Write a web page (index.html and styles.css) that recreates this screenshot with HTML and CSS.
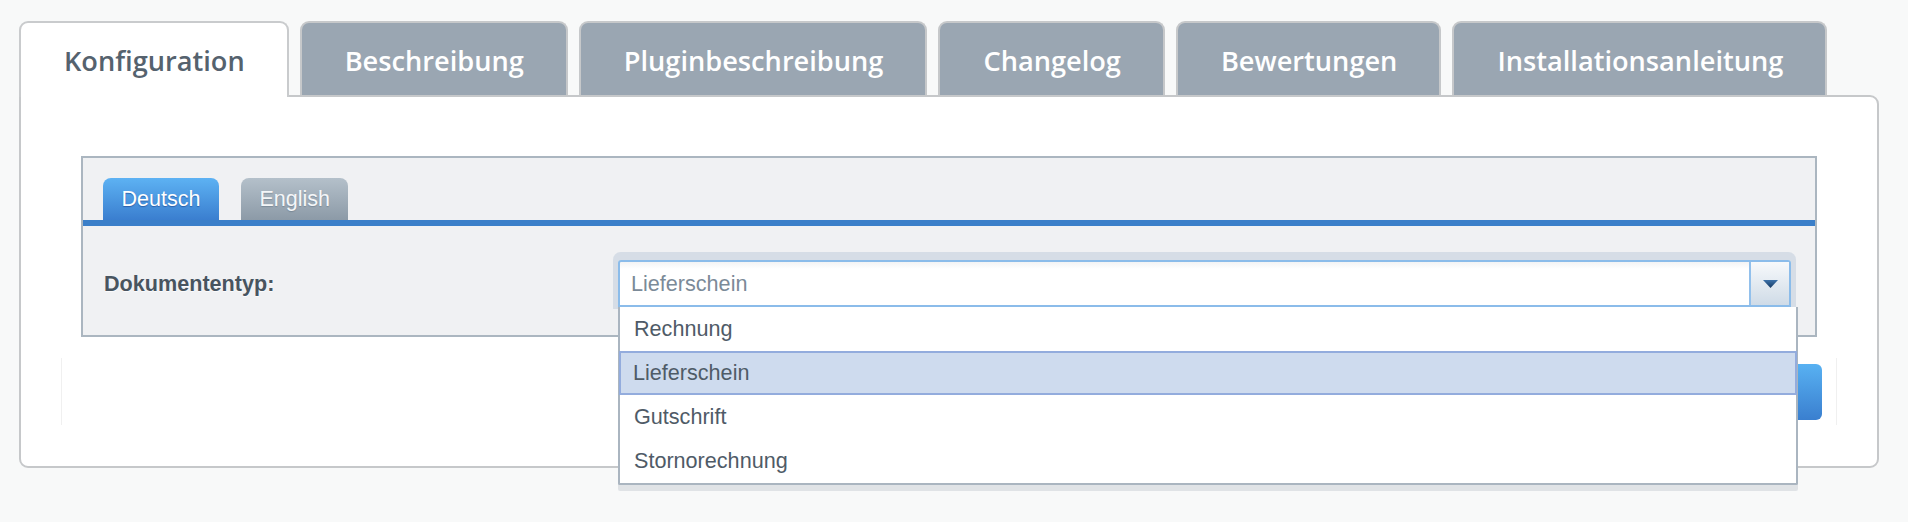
FILE: index.html
```html
<!DOCTYPE html>
<html lang="de">
<head>
<meta charset="utf-8">
<title>Plugin Konfiguration</title>
<link rel="stylesheet" href="styles.css">
</head>
<body>
<div class="page">
  <div class="tabs">
    <div class="tab active">Konfiguration</div>
    <div class="tab">Beschreibung</div>
    <div class="tab">Pluginbeschreibung</div>
    <div class="tab">Changelog</div>
    <div class="tab">Bewertungen</div>
    <div class="tab">Installationsanleitung</div>
  </div>
  <div class="panel">
    <div class="translation">
      <div class="lang-tabs">
        <div class="lang-tab lang-active">Deutsch</div>
        <div class="lang-tab">English</div>
      </div>
      <div class="lang-line"></div>
      <div class="form-row">
        <div class="label">Dokumententyp:</div>
        <div class="combo">
          <div class="select">
            <div class="select-value">Lieferschein</div>
            <div class="select-trigger">
              <svg width="15" height="8" viewBox="0 0 15 8"><defs><linearGradient id="ag" x1="0" y1="0" x2="0" y2="1"><stop offset="0" stop-color="#3d72aa"/><stop offset="1" stop-color="#163a63"/></linearGradient></defs><path d="M0 0 H15 L7.5 8 Z" fill="url(#ag)"/></svg>
            </div>
          </div>
          <ul class="list">
            <li class="item">Rechnung</li>
            <li class="item selected">Lieferschein</li>
            <li class="item">Gutschrift</li>
            <li class="item">Stornorechnung</li>
          </ul>
        </div>
      </div>
    </div>
    <div class="footer">
      <button class="save">Speichern</button>
    </div>
  </div>
</div>
</body>
</html>
```

FILE: styles.css
```css
html, body {
  margin: 0;
  padding: 0;
  background: #f8f9f9;
}
body {
  min-height: 522px;
}
.page {
  padding: 21px 29px 0 19px;
  min-height: 522px;
  box-sizing: border-box;
}
.tabs {
  display: flex;
  gap: 11px;
  align-items: flex-end;
  position: relative;
  z-index: 2;
  margin-bottom: -2px;
}
.tab {
  box-sizing: border-box;
  height: 74px;
  margin-bottom: 2px;
  padding: 3px 42px 0 43px;
  display: flex;
  align-items: center;
  font-family: "Open Sans", "Noto Sans", sans-serif;
  font-weight: 600;
  font-size: 27.2px;
  color: #ffffff;
  background: #9aa6b2;
  border: 2px solid #c6c8ca;
  border-bottom: 0;
  border-radius: 9px 9px 0 0;
  white-space: nowrap;
}
.tab.active {
  height: 76px;
  margin-bottom: 0;
  padding-bottom: 2px;
  background: #ffffff;
  color: #55626e;
  border-color: #c9cbcd;
}
.panel {
  background: #ffffff;
  border: 2px solid #c6c8ca;
  border-radius: 0 9px 9px 9px;
  padding: 59px 40px 41px 40px;
}
.translation {
  margin: 0 20px;
  background: #f0f1f3;
  border: 2px solid #abb6c0;
}
.lang-tabs {
  display: flex;
  gap: 22px;
  padding: 20px 0 0 20px;
}
.lang-tab {
  height: 42px;
  box-sizing: border-box;
  padding: 0 18.5px;
  display: flex;
  align-items: center;
  font-family: "Liberation Sans", Arial, sans-serif;
  font-size: 21.5px;
  color: #f4f6f8;
  text-shadow: 0 1px 1px rgba(40, 60, 80, 0.25);
  border-radius: 8px 8px 0 0;
  background: linear-gradient(#b4c0ca, #8c9aa7);
}
.lang-tab.lang-active {
  color: #ffffff;
  text-shadow: 0 1px 1px rgba(10, 40, 110, 0.45);
  background: linear-gradient(#5db2f3, #3a7ecf);
}
.lang-line {
  height: 6px;
  background: #3b7fc9;
}
.form-row {
  display: flex;
  align-items: center;
  padding: 34px 24px 28px 21px;
}
.label {
  flex: 0 0 514px;
  font-family: "Liberation Sans", Arial, sans-serif;
  font-weight: bold;
  font-size: 21.6px;
  color: #48545f;
  text-shadow: 0 1px 0 rgba(255, 255, 255, 0.8);
}
.combo {
  flex: 1;
  position: relative;
}
.select {
  display: flex;
  height: 47px;
  box-sizing: border-box;
  border: 2px solid #8bbcea;
  border-radius: 3px 3px 0 0;
  background: linear-gradient(#f3f4f5, #ffffff 7px);
  box-shadow: 0 -3px 0 5px rgba(196, 208, 221, 0.6);
}
.select-value {
  flex: 1;
  line-height: 43px;
  padding-left: 11px;
  font-family: "Liberation Sans", Arial, sans-serif;
  font-size: 21.6px;
  color: #7b8a98;
}
.select-trigger {
  width: 38px;
  border-left: 2px solid #92c0ec;
  background: linear-gradient(#f7f9fb, #cfdbe7);
  display: flex;
  align-items: center;
  justify-content: center;
}
.list {
  position: absolute;
  top: 100%;
  left: 0;
  right: -7px;
  margin: 0;
  padding: 0;
  list-style: none;
  background: #ffffff;
  border: 2px solid #aab5c0;
  border-top: 0;
  border-radius: 0 0 2px 2px;
  box-shadow: 0 6px 0 rgba(214, 218, 222, 0.7);
  z-index: 5;
}
.item {
  box-sizing: border-box;
  height: 44px;
  line-height: 44px;
  padding-left: 14px;
  font-family: "Liberation Sans", Arial, sans-serif;
  font-size: 21.6px;
  color: #4f5b67;
}
.item.selected {
  background: #cedbee;
  border: 2px solid #93acdd;
  line-height: 40px;
  padding-left: 12px;
  margin: 0 -1px;
}
.footer {
  margin-top: 21px;
  height: 67px;
  box-sizing: border-box;
  border-left: 1px solid #f0f0f0;
  border-right: 1px solid #f0f0f0;
  display: flex;
  justify-content: flex-end;
  align-items: flex-start;
  padding: 6px 14px 0 0;
}
.save {
  width: 160px;
  height: 56px;
  border: 0;
  border-radius: 6px;
  background: linear-gradient(#58b1f2, #3a7fcf);
  color: #ffffff;
  font-family: "Liberation Sans", Arial, sans-serif;
  font-size: 20px;
}
```
